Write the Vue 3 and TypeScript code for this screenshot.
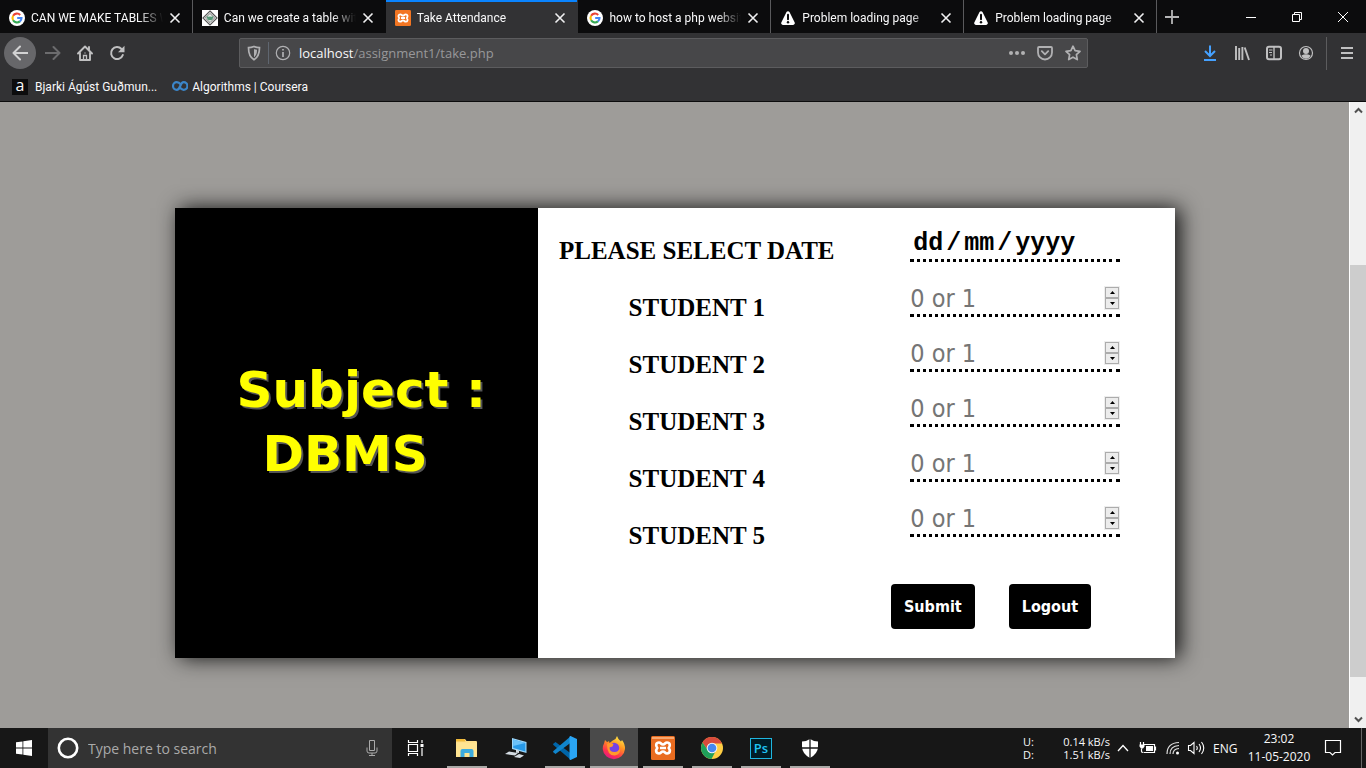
<script setup lang="ts">
import { ref } from 'vue'

interface Tab {
  title: string
  icon: 'google' | 'geeks' | 'xampp' | 'warning'
  active?: boolean
}

const tabs: Tab[] = [
  { title: 'CAN WE MAKE TABLES W', icon: 'google' },
  { title: 'Can we create a table wit', icon: 'geeks' },
  { title: 'Take Attendance', icon: 'xampp', active: true },
  { title: 'how to host a php websit', icon: 'google' },
  { title: 'Problem loading page', icon: 'warning' },
  { title: 'Problem loading page', icon: 'warning' },
]

const date = ref('')
const students = ref([1, 2, 3, 4, 5].map((id) => ({ id, mark: '' as number | string })))

function step(student: { mark: number | string }, value: number) {
  student.mark = value
}

const apps = [
  { name: 'File Explorer', icon: 'folder', open: true },
  { name: 'This PC', icon: 'pc', open: false },
  { name: 'Visual Studio Code', icon: 'code', open: true },
  { name: 'Firefox', icon: 'firefox', open: true, focused: true },
  { name: 'XAMPP', icon: 'xampp', open: true },
  { name: 'Chrome', icon: 'chrome', open: true },
  { name: 'Photoshop', icon: 'ps', open: true },
  { name: 'Windows Security', icon: 'shield', open: true },
]
</script>

<template>
  <div class="screen">
    <header class="browser">
      <div class="tabbar">
        <div class="tabs">
          <div v-for="(tab, i) in tabs" :key="i" class="tab" :class="{ active: tab.active }">
            <svg v-if="tab.icon === 'google'" class="fav" viewBox="0 0 16 16">
              <circle cx="8" cy="8" r="8" fill="#fff" />
              <g fill="none" stroke-width="2.1">
                <path d="M4.1 5.8A4.5 4.5 0 0 1 11.2 4.9" stroke="#ea4335" />
                <path d="M4.1 5.8A4.5 4.5 0 0 0 4.1 10.2" stroke="#fbbc05" />
                <path d="M4.1 10.2A4.5 4.5 0 0 0 10.9 11.4" stroke="#34a853" />
                <path d="M10.9 11.4A4.5 4.5 0 0 0 12.5 8H8.2" stroke="#4285f4" />
              </g>
            </svg>
            <svg v-else-if="tab.icon === 'geeks'" class="fav" viewBox="0 0 16 16">
              <rect width="16" height="16" fill="#fff" />
              <path d="M8 1l7 7-7 7-7-7z" fill="none" stroke="#555" stroke-width="1.2" />
              <path d="M8 3.4L12.6 8 8 12.6 3.4 8z" fill="#e6eee9" stroke="#555" stroke-width=".8" />
              <path d="M4.500 6q1.500 1 3.500 .5Q10 7 11.500 6l-1 3.500q-2.500 1.500-5 0z" fill="#579978" />
            </svg>
            <svg v-else-if="tab.icon === 'xampp'" class="fav" viewBox="0 0 24 24">
              <rect width="24" height="24" rx="2" fill="#f37623" />
              <path d="M8 6.500c-3 0-3.700 3-1.700 5.500-2 2.500-1.300 5.500 1.700 5.500 2 0 2-2 4-2s2 2 4 2c3 0 3.700-3 1.700-5.500 2-2.500 1.300-5.500-1.700-5.500-2 0-2 2-4 2s-2-2-4-2zM9 12h6" fill="none" stroke="#fff" stroke-width="2.700" stroke-linejoin="round" />
            </svg>
            <svg v-else class="fav" viewBox="0 0 16 16">
              <path d="M8 1.200a1.600 1.600 0 0 1 1.500.9l5.200 10.400a1.700 1.700 0 0 1-1.500 2.400H2.800a1.700 1.700 0 0 1-1.500-2.400L6.500 2.100A1.600 1.600 0 0 1 8 1.200z" fill="#fff" />
              <path d="M8 4.800v4.400" stroke="#0c0c0d" stroke-width="2" stroke-linecap="round" />
              <circle cx="8" cy="12.200" r="1.200" fill="#0c0c0d" />
            </svg>
            <span class="tab-title">{{ tab.title }}</span>
            <button class="plain close" aria-label="Close tab">
              <svg viewBox="0 0 12 12" width="12" height="12"><path d="M1.500 1.500l9 9M10.500 1.500l-9 9" stroke="#f0f0f1" stroke-width="1.600" /></svg>
            </button>
          </div>
        </div>
        <button class="plain new-tab" aria-label="New tab">
          <svg viewBox="0 0 16 16" width="16" height="16"><path d="M8 1v14M1 8h14" stroke="#b5b5b6" stroke-width="1.800" /></svg>
        </button>
        <div class="window-buttons">
          <button class="plain" aria-label="Minimize"><svg viewBox="0 0 12 12" width="12" height="12"><path d="M1 6h10" stroke="#fff" shape-rendering="crispEdges" /></svg></button>
          <button class="plain" aria-label="Restore"><svg viewBox="0 0 12 12" width="12" height="12"><path d="M1.500 3.500h7v7h-7zM3.500 3.500v-2h7v7h-2" fill="none" stroke="#fff" /></svg></button>
          <button class="plain" aria-label="Close"><svg viewBox="0 0 12 12" width="12" height="12"><path d="M1 1l10 10M11 1L1 11" stroke="#fff" /></svg></button>
        </div>
      </div>

      <div class="navbar">
        <button class="plain back" aria-label="Back">
          <svg viewBox="0 0 16 16"><path d="M15.500 8H1.500M8 1.500L1.500 8 8 14.500" fill="none" stroke="#d2d2d3" stroke-width="2" stroke-linecap="round" stroke-linejoin="round" /></svg>
        </button>
        <button class="plain tool" aria-label="Forward">
          <svg viewBox="0 0 16 16"><path d="M.5 8h14M8.500 2l6 6-6 6" fill="none" stroke="#6c6c6e" stroke-width="2" stroke-linecap="round" stroke-linejoin="round" /></svg>
        </button>
        <button class="plain tool" aria-label="Home">
          <svg viewBox="0 0 16 16"><path d="M1 8.500l7-7 7 7M3 7.500V15h10V7.500M12 2v3" fill="none" stroke="#c0c0c1" stroke-width="1.900" stroke-linecap="round" stroke-linejoin="round" /><path d="M6.500 15v-4.500h3V15M8 7.500v1" fill="none" stroke="#c0c0c1" stroke-width="1.300" /></svg>
        </button>
        <button class="plain tool" aria-label="Reload">
          <svg viewBox="0 0 16 16"><path d="M13.800 10A6 6 0 1 1 12.500 4" fill="none" stroke="#c0c0c1" stroke-width="2" stroke-linecap="round" /><path d="M15.500.8v6.400H9z" fill="#c0c0c1" /></svg>
        </button>
        <div class="urlbar">
          <svg viewBox="0 0 16 16"><path d="M8 1.500c2 .8 3.500 1.200 5.500 1.200 0 5.500-1 9.300-5.500 12-4.500-2.700-5.500-6.500-5.500-12C4.500 2.700 6 2.300 8 1.500z" fill="none" stroke="#b1b1b3" stroke-width="1.700" /><path d="M8 4c1 .5 2 .7 3 .8 0 3.500-.7 5.800-3 7.500z" fill="#b1b1b3" /></svg>
          <i class="url-sep"></i>
          <svg viewBox="0 0 16 16"><circle cx="8" cy="8" r="6.700" fill="none" stroke="#b1b1b3" stroke-width="1.200" /><path d="M8 7v5M8 4v1.600" stroke="#b1b1b3" stroke-width="1.700" /></svg>
          <a class="url" href="#">localhost<span>/assignment1/take.php</span></a>
          <svg viewBox="0 0 16 16"><g fill="#b1b1b3"><circle cx="2" cy="8" r="2" /><circle cx="8" cy="8" r="2" /><circle cx="14" cy="8" r="2" /></g></svg>
          <svg viewBox="0 0 16 16"><path d="M2 2h12q1 0 1 1v4.500a7 7 0 0 1-14 0V3q0-1 1-1z" fill="none" stroke="#b1b1b3" stroke-width="1.800" /><path d="M4.800 6.200L8 9.300l3.200-3.100" fill="none" stroke="#b1b1b3" stroke-width="1.800" stroke-linecap="round" stroke-linejoin="round" /></svg>
          <svg viewBox="0 0 16 16"><path d="M8 1.200l2.100 4.500 4.900.6-3.600 3.400.9 4.900L8 12.200l-4.300 2.400.9-4.900L1 6.300l4.900-.6z" fill="none" stroke="#b1b1b3" stroke-width="1.700" stroke-linejoin="round" /></svg>
        </div>
        <div class="nav-right">
          <svg viewBox="0 0 16 16"><path d="M8 .5v10M3 6l5 5 5-5M2 15h12" fill="none" stroke="#45a1ff" stroke-width="2" /></svg>
          <svg viewBox="0 0 16 16"><path d="M2 1v14M5.200 3v12M8.400 2v13" stroke="#c0c0c1" stroke-width="1.900" /><path d="M10.700 2.500L15 15" stroke="#c0c0c1" stroke-width="1.900" /></svg>
          <svg viewBox="0 0 16 16"><rect x="1" y="1.800" width="14" height="12.400" rx="2" fill="none" stroke="#c0c0c1" stroke-width="2" /><path d="M8 2v12" stroke="#c0c0c1" stroke-width="1.400" /><path d="M3 5h3.500M3 7.500h3M4 10h2" stroke="#c0c0c1" /></svg>
          <svg viewBox="0 0 16 16"><circle cx="8" cy="8" r="6.500" fill="none" stroke="#c0c0c1" stroke-width="1.200" /><circle cx="8" cy="6" r="3" fill="#c0c0c1" /><path d="M3.500 10.500q4.500-2.500 9 0-1.500 3.300-4.500 3.300t-4.500-3.300z" fill="#c0c0c1" /></svg>
        </div>
        <button class="plain menu" aria-label="Open menu">
          <svg viewBox="0 0 16 16" width="16" height="16"><path d="M2 3h12M2 8h12M2 13h12" stroke="#c0c0c1" stroke-width="2" /></svg>
        </button>
      </div>

      <nav class="bookmarks">
        <a href="#"><b class="letter">a</b>Bjarki Ágúst Guðmun...</a>
        <a href="#">
          <svg viewBox="0 0 16 16" width="16" height="16"><path d="M8.800 5.500Q7 3.200 4.800 3.200a3.700 3.700 0 0 0 0 7.600C8.500 10.800 8 3.200 11.600 3.200a3.700 3.700 0 0 1 0 7.600Q10 10.800 8.300 9" fill="none" stroke="#3b85c8" stroke-width="2.200" /></svg>Algorithms | Coursera</a>
      </nav>
    </header>

    <div class="viewport">
      <main class="page">
        <section class="card">
          <h1 class="subject"><span>Subject :</span><span class="name">DBMS</span></h1>
          <form class="form" @submit.prevent>
            <div class="labels">
              <label for="date">PLEASE SELECT DATE</label>
              <label v-for="s in students" :key="s.id" :for="'student' + s.id">STUDENT {{ s.id }}</label>
            </div>
            <div class="fields">
              <input id="date" v-model="date" class="line date" type="date" />
              <div v-for="s in students" :key="s.id" class="line number">
                <input :id="'student' + s.id" v-model="s.mark" type="number" min="0" max="1" placeholder="0 or 1" />
                <span class="spin">
                  <button type="button" aria-label="Increase" @click="step(s, 1)"><svg viewBox="0 0 5 3"><path d="M0 3L2.500 0 5 3z" /></svg></button>
                  <button type="button" aria-label="Decrease" @click="step(s, 0)"><svg viewBox="0 0 5 3"><path d="M0 0L2.500 3 5 0z" /></svg></button>
                </span>
              </div>
              <div class="actions">
                <button type="submit">Submit</button>
                <button type="button">Logout</button>
              </div>
            </div>
          </form>
        </section>
      </main>
      <div class="scrollbar">
        <svg viewBox="0 0 17 17"><path d="M5 10.500L8.500 7l3.500 3.500" fill="none" stroke="#505050" stroke-width="2" /></svg>
        <div class="track"><i class="thumb"></i></div>
        <svg viewBox="0 0 17 17"><path d="M5 6.500L8.500 10 12 6.500" fill="none" stroke="#505050" stroke-width="2" /></svg>
      </div>
    </div>

    <footer class="taskbar">
      <button class="plain start" aria-label="Start">
        <svg viewBox="0 0 16 16" width="16" height="16" fill="#fff"><path d="M0 2.300l6.500-.9v6.200H0zM7.300 1.300L16 0v7.600H7.300zM0 8.400h6.500v6.200L0 13.700zM7.300 8.400H16V16l-8.700-1.300z" /></svg>
      </button>
      <div class="search">
        <svg viewBox="0 0 22 22" width="22" height="22"><circle cx="11" cy="11" r="9.200" fill="none" stroke="#fff" stroke-width="2.600" /></svg>
        <input type="text" aria-label="Search" placeholder="Type here to search" />
        <svg viewBox="0 0 16 18" width="16" height="18"><path d="M5.500 1.500h5v10h-5zM3 8.500v3.500q0 2 2 2h6q2 0 2-2V8.500M8 14v2.500M5 16.500h6" fill="none" stroke="#aaa" /></svg>
      </div>
      <button class="plain start" aria-label="Task view">
        <svg viewBox="0 0 18 16" width="18" height="16" fill="none" stroke="#fff"><path d="M1.500 4.500h9v7h-9zM1.500 0v2.500h9V0M1.500 16v-2.500h9V16M15 0v3M15 8v8" stroke-width="1.200" /><path d="M13.500 4h3v3h-3z" fill="#fff" stroke="none" /></svg>
      </button>
      <div class="apps">
        <button v-for="app in apps" :key="app.name" class="plain app" :class="{ open: app.open, focused: app.focused }" :aria-label="app.name">
          <svg v-if="app.icon === 'folder'" viewBox="0 0 24 24"><path d="M1 4q0-1 1-1h8l1.500 2H21q1 0 1 1v15H1z" fill="#ffe08c" /><path d="M1 4q0-1 1-1h7.500l1 2.500H1z" fill="#f2ba38" /><path d="M1 7h21v13.500H1z" fill="#ffe492" /><path d="M5.500 21v-6q0-2 2-2h9q2 0 2 2v6h-4v-4h-5v4z" fill="#3cabde" /></svg>
          <svg v-else-if="app.icon === 'pc'" viewBox="0 0 24 24"><path d="M8 2l14.500 4v11L8 13z" fill="#9fd8fa" /><path d="M9.200 3.600l12.200 3.300v8.500L9.200 12z" fill="#2799e8" /><path d="M9.200 3.600l12.200 3.300L9.200 10z" fill="#6bc2fa" /><path d="M5 15.500l9 1.500-3 2.500-10-1.500zM10 21l5-3 5 1.500-4 2.500zM12 13.500l3 1v2.500l-3-.5z" fill="#d4dce2" /></svg>
          <svg v-else-if="app.icon === 'code'" viewBox="0 0 24 24"><path d="M0 8l2.500-2L18 17.500V24L1 9.500q-1-.7-1-1.500z" fill="#0065a9" /><path d="M0 16q0-.7 1-1.500L18 0v6.500L2.500 18z" fill="#1085cd" /><path d="M17.500 0L24 3v18l-6.500 3q-1 0-1-1V1q0-1 1-1z" fill="#2aa5f4" /></svg>
          <svg v-else-if="app.icon === 'firefox'" viewBox="0 0 24 24">
            <defs><linearGradient id="fire" x1="0.8" y1="0" x2="0.3" y2="1"><stop offset="0" stop-color="#fff24a" /><stop offset=".4" stop-color="#ff9422" /><stop offset=".75" stop-color="#ff344c" /><stop offset="1" stop-color="#e31587" /></linearGradient></defs>
            <path d="M2 7.500l1-3.500 2 2q1 0 2-1l.500 2Q11 4 13.500 3L15 0q1 3.500 4 5.500L20 4q3.200 4 3 9a11.200 11.200 0 0 1-22.300 0Q.5 10 2 7.500z" fill="url(#fire)" /><circle cx="12" cy="12" r="5.200" fill="#7542e5" /><path d="M5 8q3-2 6.500 0l-1 2.500-3 1q0 4.500 5 4.500 4.500 0 5-4 2 6-4.500 7.500Q5 20 5 8z" fill="#ff9a2c" />
          </svg>
          <svg v-else-if="app.icon === 'xampp'" viewBox="0 0 24 24"><rect width="24" height="24" rx="1.500" fill="#e96c20" /><path d="M1 1h22v2H1z" fill="#f7a870" /><path d="M8 6.500c-3 0-3.700 3-1.700 5.500-2 2.500-1.300 5.500 1.700 5.500 2 0 2-2 4-2s2 2 4 2c3 0 3.700-3 1.700-5.500 2-2.500 1.300-5.500-1.700-5.500-2 0-2 2-4 2s-2-2-4-2zM9 12h6" fill="none" stroke="#fff" stroke-width="2.700" stroke-linejoin="round" /></svg>
          <svg v-else-if="app.icon === 'chrome'" viewBox="0 0 24 24"><circle cx="12" cy="12" r="11" fill="#ffce44" /><path d="M2.500 6.500A11 11 0 0 1 22 7.500H12L7.800 14z" fill="#d94b3c" /><path d="M2.500 6.500A11 11 0 0 0 11.500 23l4.700-9L12 17 7.800 14z" fill="#1fa05a" /><circle cx="12" cy="12" r="5.300" fill="#f4f4f4" /><circle cx="12" cy="12" r="4.300" fill="#4688f1" /></svg>
          <span v-else-if="app.icon === 'ps'" class="ps">Ps</span>
          <svg v-else viewBox="0 0 24 24"><path d="M12 3q4 2.500 8 2.500v5q0 7-8 11.500-8-4.500-8-11.500v-5Q8 5.500 12 3z" fill="#fff" /><path d="M12 2v20M3 12h18" stroke="#1a1a1a" stroke-width="1.300" /></svg>
        </button>
      </div>
      <div class="tray">
        <dl class="net"><dt>U:</dt><dd>0.14 kB/s</dd><dt>D:</dt><dd>1.51 kB/s</dd></dl>
        <svg class="chev" viewBox="0 0 12 16"><path d="M1 11l5-5.500L11 11" fill="none" stroke="#fff" stroke-width="1.300" /></svg>
        <svg class="batt" viewBox="0 0 18 16"><path d="M5 4.500h10.500v8H5M16.500 6.500v4M2.500 8.500v3q0 1 2 1M1.500 2v3M4.500 2v3" fill="none" stroke="#fff" stroke-width="1.200" /><path d="M.500 4.500h5v2l-1.500 2H2l-1.500-2zM7 6h7v5H7z" fill="#fff" /></svg>
        <svg class="wifi" viewBox="0 0 14 16"><g fill="none" stroke="#ddd" stroke-width="1.200"><path d="M1 14Q1 3 13 2.500M4 14q0-8 9-8.500M7 14q0-5 6-5.500" /></g><circle cx="11.500" cy="13" r="1.500" fill="#fff" /></svg>
        <svg class="vol" viewBox="0 0 18 16"><path d="M1.500 5.500h2L7 2.500v11l-3.500-3h-2zM9.500 6q1.500 2 0 4M12 4q3 4 0 8M14.500 2q4.500 6 0 12" fill="none" stroke="#fff" stroke-width="1.100" /></svg>
        <span class="lang">ENG</span>
        <time class="clock"><span>23:02</span><span>11-05-2020</span></time>
        <svg class="note" viewBox="0 0 18 18"><path d="M1.500 1.500h15v12H11L8.500 16 6 13.500H1.500z" fill="none" stroke="#fff" stroke-width="1.200" /></svg>
        <i class="desktop"></i>
      </div>
    </footer>
  </div>
</template>

<style>
body { margin: 0; }
</style>

<style scoped>
* { box-sizing: border-box; }
.screen { display: flex; flex-direction: column; min-height: 100vh; font-family: "Open Sans", "Noto Sans", sans-serif; font-size: 12px; color: #f9f9fa; }
svg { display: block; flex: none; }
i { flex: none; }
a { color: inherit; text-decoration: none; }
.plain { display: flex; align-items: center; justify-content: center; flex: none; padding: 0; border: 0; background: none; color: inherit; font: inherit; }

.browser { background: #323234; border-bottom: 1px solid #0c0c0d; }
.tabbar { display: flex; height: 33px; background: #0c0c0d; }
.tabs { display: flex; flex: 0 1 1157px; min-width: 0; }
.tab { display: flex; align-items: center; gap: 6px; flex: 1 1 0; min-width: 0; padding: 2px 11px 0 9px; border-right: 1px solid #5a5a5c; font-family: Roboto, sans-serif; }
.tab.active { background: #323234; box-shadow: inset 0 2px #0a84ff; border-right-color: #323234; }
.tab:nth-child(2) { border-right-color: #0c0c0d; }
.fav { width: 16px; height: 16px; }
.tab-title { flex: 1; overflow: hidden; white-space: nowrap; mask-image: linear-gradient(to left, transparent, #000 24px); }
.close { width: 12px; height: 12px; }
.new-tab { width: 30px; }
.window-buttons { display: flex; margin-left: auto; }
.window-buttons button { width: 46px; }

.navbar { display: flex; align-items: center; height: 40px; padding-left: 4px; }
.navbar svg { width: 16px; height: 16px; }
.back { width: 32px; height: 32px; margin-right: 1px; border-radius: 50%; background: #67676a; }
.tool { width: 32px; height: 32px; }
.urlbar { display: flex; align-items: center; flex: 0 1 849px; height: 30px; margin-left: 106px; padding: 0 6px; border: 1px solid #5c5c5e; border-radius: 2px; background: #474749; gap: 12px; min-width: 0; }
.url-sep { width: 1px; height: 22px; margin: 0 -6px; background: #5f6670; }
.url { flex: 1; margin-left: -4px; font-size: 13px; white-space: nowrap; overflow: hidden; }
.url span { color: #98989a; }
.nav-right { display: flex; gap: 16px; margin-left: auto; padding-right: 12px; border-right: 1px solid #5c5c5e; height: 33px; align-items: center; }
.menu { width: 39px; height: 32px; }

.bookmarks { display: flex; gap: 15px; height: 28px; padding: 0 12px; align-items: center; font-family: Roboto, sans-serif; }
.bookmarks a { display: flex; align-items: center; gap: 7px; white-space: nowrap; }
.bookmarks a + a { gap: 4px; }
.letter { width: 16px; height: 16px; background: #0c0c0d; font: 16px/13px "Open Sans", sans-serif; text-align: center; }

.viewport { display: flex; flex: 1; background: #9e9c99; }
.page { flex: 1; min-width: 0; padding: 106px 0 70px; }
.card { display: grid; grid-template-columns: 363fr 637fr; width: min(1000px, 100%); min-height: 450px; margin: 0 auto; background: #fff; box-shadow: 5px 0 20px #111; color: #000; }
.subject { margin: 0; padding: 150px 0 0 62px; background: #000; color: #ff0; font: bold 50px/64px "DejaVu Sans", sans-serif; text-shadow: 2px 2px #555; white-space: nowrap; }
.subject span { display: block; }
.subject .name { padding-left: 26px; }
.form { display: grid; grid-template-columns: 1fr 1fr; }
.labels { display: flex; flex-direction: column; padding-top: 14px; font: bold 25px/57px "Liberation Serif", serif; text-align: center; white-space: nowrap; }
.fields { display: flex; flex-direction: column; align-items: center; gap: 21px; padding-top: 20px; }
.line { display: flex; align-items: center; width: 210px; height: 34px; border: 0; border-bottom: 3px dotted #000; padding: 0; background: none; }
.date { font: bold 25px/28px "Liberation Mono", monospace; color: #000; outline: none; padding-left: 3px; }
.date::-webkit-calendar-picker-indicator { display: none; }
.date::-webkit-datetime-edit { padding: 0; }
.date::-webkit-datetime-edit-fields-wrapper { display: inline-grid; grid-auto-flow: column; column-gap: 3px; padding: 0; }
.date::-webkit-datetime-edit-day-field { grid-area: 1 / 1; padding: 0; color: #000; }
.date::-webkit-datetime-edit-month-field { grid-area: 1 / 3; padding: 0; color: #000; }
.date::-webkit-datetime-edit-year-field { grid-area: 1 / 5; padding: 0; color: #000; }
.date::-webkit-datetime-edit-text { grid-row: 1; padding: 0; }
.number input { flex: 1; min-width: 0; padding: 0; border: 0; outline: none; background: none; font: 25px/30px "DejaVu Sans Condensed", "DejaVu Sans", sans-serif; color: #000; appearance: textfield; }
.number input::placeholder { color: #757575; opacity: 1; }
.number input::-webkit-inner-spin-button { appearance: none; margin: 0; }
.spin { display: flex; flex-direction: column; width: 16px; height: 24px; border: 1px solid #eee; margin-bottom: 2px; }
.spin button { display: flex; align-items: center; justify-content: center; flex: 1; padding: 0; border: 1px solid #acacac; background: #ececec; }
.spin svg { width: 5px; height: 3px; }
.actions { display: flex; align-self: flex-start; gap: 34px; margin: 26px 0 0 35px; }
.actions button { height: 45px; padding: 0 13px; border: 0; border-radius: 4px; background: #000; color: #fff; font: bold 16px "DejaVu Sans Condensed", "DejaVu Sans", sans-serif; }

.scrollbar { display: flex; flex-direction: column; width: 17px; background: #f0f0f0; border-left: 1px solid #fff; }
.scrollbar svg { width: 17px; height: 17px; }
.track { flex: 1; display: grid; grid-template-rows: 146fr 412fr 34fr; }
.thumb { grid-row: 2; background: #cdcdcd; }

.taskbar { display: flex; height: 40px; background: #171717; }
.start { width: 48px; }
.search { display: flex; align-items: center; flex: 0 1 344px; gap: 9px; padding: 0 12px 0 9px; background: #333; }
.search input { flex: 1; min-width: 0; padding: 0; border: 0; outline: none; background: none; font: 14px "Open Sans", sans-serif; color: #fff; }
.search input::placeholder { color: #aaa; opacity: 1; }
.apps { display: flex; gap: 1px; padding-left: 3px; }
.app { width: 48px; position: relative; }
.app svg { width: 24px; height: 24px; }
.app.open::after { content: ""; position: absolute; left: 4px; right: 4px; bottom: 0; height: 2px; background: #aaa9a7; }
.app.focused { background: #4a4a4a; }
.app.focused::after { left: 0; right: 0; }
.ps { width: 22px; height: 21px; border: 1px solid #1fb6e0; background: #001d26; color: #1fc4f4; font-size: 13px; font-weight: 600; line-height: 19px; text-align: center; }
.tray { display: flex; align-items: center; margin-left: auto; white-space: nowrap; }
.net { display: grid; grid-template-columns: 1fr auto; width: 87px; margin: 0 7px 0 0; font-size: 11px; line-height: 13px; }
.net dd { margin: 0; text-align: right; }
.chev { width: 12px; height: 16px; margin-right: 10px; }
.batt { width: 18px; height: 16px; margin-right: 9px; }
.wifi { width: 14px; height: 16px; margin-right: 7px; }
.vol { width: 18px; height: 16px; margin-right: 8px; }
.lang { width: 26px; }
.clock { display: flex; flex-direction: column; width: 80px; text-align: center; line-height: 18px; }
.note { width: 18px; height: 18px; margin: 0 19px 0 5px; }
.desktop { width: 5px; height: 40px; border-left: 1px solid #666; }
</style>
